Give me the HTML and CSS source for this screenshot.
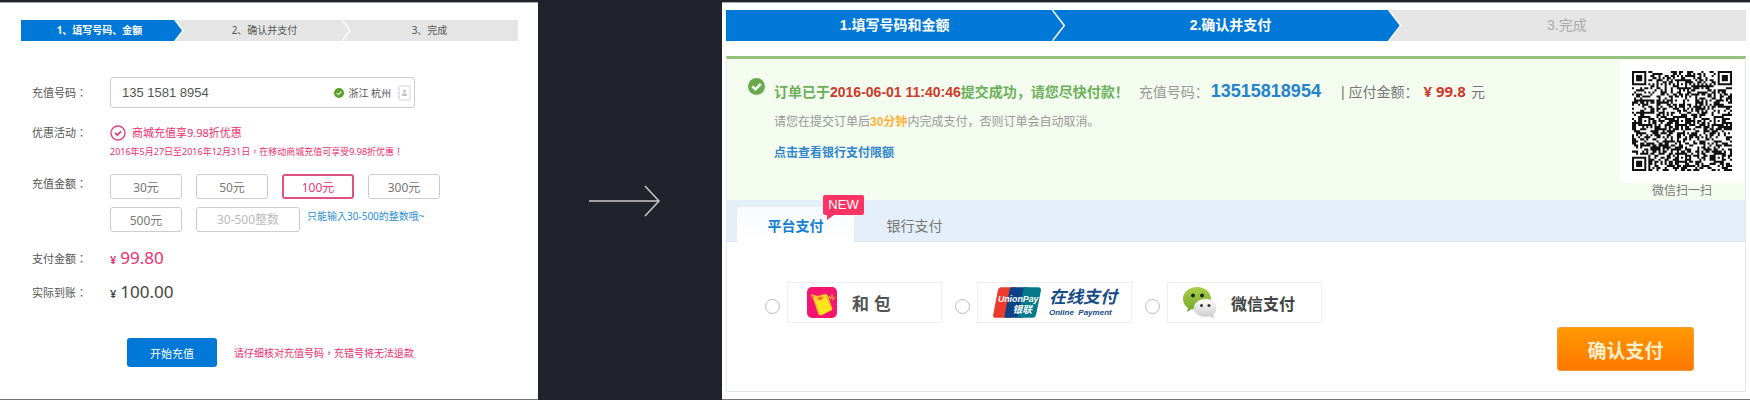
FILE: index.html
```html
<!DOCTYPE html>
<html lang="zh-CN">
<head>
<meta charset="utf-8">
<title>话费充值</title>
<link rel="stylesheet" href="styles.css">
</head>
<body>
<main class="board">
  <section class="panel recharge">
    <ol class="steps steps-small">
      <li class="step done">1、填写号码、金额</li>
      <li class="step">2、确认并支付</li>
      <li class="step">3、完成</li>
    </ol>
    <form class="form" lang="zh-Hant">
      <div class="row">
        <label class="name tall" for="phone">充值号码：</label>
        <div class="phone">
          <input id="phone" class="phone-input" type="text" value="135 1581 8954">
          <svg class="ok" viewBox="0 0 10 10"><circle cx="5" cy="5" r="5" fill="#5a9e2b"/><path d="M2.6 5l1.8 1.7 3-3.2" fill="none" stroke="#e4f3d8" stroke-width="1.1"/></svg>
          <span class="region">浙江 杭州</span>
          <svg class="book" viewBox="0 0 14 16"><rect x="2" y="1" width="11" height="14" rx="1" fill="#fff" stroke="#d4d4d4"/><path d="M0.5 4h2M0.5 8h2M0.5 12h2" stroke="#d4d4d4"/><circle cx="7.5" cy="6" r="1.6" fill="#c4c4c4"/><path d="M4.8 11c0-4 5.400-4 5.400 0z" fill="#c4c4c4"/></svg>
        </div>
      </div>
      <div class="row promo-row">
        <span class="name">优惠活动：</span>
        <div class="promo">
          <p class="promo-title"><svg class="promo-icon" viewBox="0 0 16 16"><circle cx="8" cy="8" r="7" fill="none" stroke="#e0447a" stroke-width="1.400"/><path d="M5 7.800l2.300 2.200 3.900-3.600" fill="none" stroke="#e0447a" stroke-width="1.800"/></svg>商城充值享9.98折优惠</p>
          <p class="promo-note">2016年5月27日至2016年12月31日，在移动商城充值可享受9.98折优惠！</p>
        </div>
      </div>
      <div class="row">
        <span class="name">充值金额：</span>
        <div class="amounts">
          <button type="button" class="amount">30元</button>
          <button type="button" class="amount">50元</button>
          <button type="button" class="amount chosen">100元</button>
          <button type="button" class="amount">300元</button>
          <button type="button" class="amount">500元</button>
          <input class="amount custom" type="text" placeholder="30-500整数" aria-label="其他金额">
          <span class="hint">只能输入30-500的整数哦~</span>
        </div>
      </div>
      <div class="totals">
        <div class="row total"><span class="name">支付金额：</span><span class="price pink"><small class="yen">¥</small>99.80</span></div>
        <div class="row total"><span class="name">实际到账：</span><span class="price"><small class="yen">¥</small>100.00</span></div>
      </div>
      <div class="submit">
        <button type="button" class="start">开始充值</button>
        <span class="warning">请仔细核对充值号码，充错号将无法退款</span>
      </div>
    </form>
  </section>

  <div class="between">
    <svg class="arrow" viewBox="0 0 72 32"><path d="M0 16h70M56 1l14 15-14 15" fill="none" stroke="#c9c9cb" stroke-width="1.500"/></svg>
  </div>

  <section class="panel pay">
    <ol class="steps steps-large">
      <li class="step done">1.填写号码和金额</li>
      <li class="step done">2.确认并支付</li>
      <li class="step">3.完成</li>
    </ol>
    <div class="card">
      <div class="notice">
        <svg class="notice-icon" viewBox="0 0 17 17"><circle cx="8.500" cy="8.500" r="8.500" fill="#69aa4c"/><path d="M4.300 8.400l3.100 3 5.400-5.600" fill="none" stroke="#fff" stroke-width="2.400"/></svg>
        <div class="notice-text">
          <p class="order"><span class="green">订单已于</span><strong class="time">2016-06-01 11:40:46</strong><span class="green">提交成功，请您尽快付款！</span><span class="order-label">充值号码：</span><strong class="number">13515818954</strong><span class="due">| 应付金额：</span><strong class="sum">¥ 99.8</strong><span class="due-unit">元</span></p>
          <p class="expire">请您在提交订单后<span class="minutes">30分钟</span>内完成支付，否则订单会自动取消。</p>
          <p class="limit"><a class="limit-link" href="#">点击查看银行支付限额</a></p>
        </div>
        <figure class="scan">
          <div class="qr-box"><svg class="qr" id="qr" viewBox="0 0 49 49" role="img" aria-label="微信支付二维码"></svg></div>
          <figcaption class="scan-caption">微信扫一扫</figcaption>
        </figure>
      </div>
      <div class="tabs">
        <button type="button" class="tab active">平台支付<span class="badge">NEW</span></button>
        <button type="button" class="tab">银行支付</button>
      </div>
      <form class="checkout">
        <div class="methods">
          <label class="method">
            <input class="radio" type="radio" name="method">
            <span class="brand hebao">
              <svg class="hebao-logo" viewBox="0 0 30 31"><rect width="30" height="31" rx="5" fill="#f5146f"/><path d="M6 11l12-4q2 0 3 2l4 12q1 2-2 3l-8 4q-3 1-4-2z" fill="#ffe51b"/><path d="M4 8l3 4 5 14M19 9l6 13" fill="none" stroke="#ffb52a" stroke-width="1.200"/><path d="M4 7l7 2 8-2-2 5q-4 4-8 0z" fill="#ffc02a"/><path d="M10 11q4 4 6-1z" fill="#f0542a"/><path d="M22 9l2 3M25 7v4M28 10l-3 3" stroke="#ff9b2f" stroke-width="1.400"/></svg>
              <span class="hebao-name">和 包</span>
            </span>
          </label>
          <label class="method">
            <input class="radio" type="radio" name="method">
            <span class="brand union">
              <svg class="union-logo" viewBox="0 0 49 31"><path d="M8 0h16l-6 31H2q-2 0-2-2L5 3q1-3 3-3z" fill="#ee3a2c"/><path d="M19 0h17l-6 31H13q-2 0-1-3l5-26q0-2 2-2z" fill="#0a4286"/><path d="M33 0h13q3 0 3 3l-5 25q-1 3-3 3H27q-2 0-1-3l5-26q0-2 2-2z" fill="#04798a"/><text class="union-latin" x="5" y="15">UnionPay</text><text class="union-cjk" x="20" y="26">银联</text></svg>
              <span class="union-text"><span class="union-name">在线支付</span><span class="union-sub">Online&nbsp; Payment</span></span>
            </span>
          </label>
          <label class="method">
            <input class="radio" type="radio" name="method">
            <span class="brand wechat">
              <svg class="wechat-logo" viewBox="0 0 34 32"><defs><linearGradient id="leaf" x2="0" y2="1"><stop stop-color="#a9cf46"/><stop offset="1" stop-color="#73a82c"/></linearGradient><linearGradient id="pearl" x2="0" y2="1"><stop stop-color="#fff"/><stop offset="1" stop-color="#c9c9c9"/></linearGradient></defs><path d="M14 0C6 0 0 5 0 12c0 4 2 7 5 9l-1 4 5-3c14 3 19-4 19-10C28 5 22 0 14 0z" fill="url(#leaf)"/><circle cx="10" cy="8.500" r="1.900" fill="#222"/><circle cx="19" cy="8.500" r="1.900" fill="#222"/><path d="M23 12c-7 0-12 4-12 9 0 6 7 10 15 8l5 2-1-4c2-1 3-4 3-6 0-5-4-9-10-9z" fill="url(#pearl)" stroke="#d5d5d5" stroke-width=".5"/><circle cx="18.500" cy="18.500" r="1.500" fill="#333"/><circle cx="26" cy="18.500" r="1.500" fill="#333"/></svg>
              <span class="wechat-name">微信支付</span>
            </span>
          </label>
        </div>
        <button type="button" class="confirm">确认支付</button>
      </form>
    </div>
  </section>
</main>
<script src="qr.js"></script>
</body>
</html>
```
FILE: styles.css
```css
* { box-sizing: border-box; }
body {
  margin: 0;
  background: #20232b;
  color: #555;
  font-family: "Noto Sans", "Noto Sans CJK SC", sans-serif;
  font-size: 11px;
}
p, ol, figure { margin: 0; padding: 0; }
button, input { font-family: inherit; margin: 0; }
svg { display: block; flex: none; }

.board {
  display: grid;
  grid-template-columns: 538fr 184fr 1028fr;
  min-height: 100vh;
  padding-top: 2px;
}
.panel {
  background: #fff;
  border-top: 1px solid #aaa;
  border-bottom: 1px solid #777;
}

.steps { display: flex; list-style: none; }
.step {
  --fill: #e5e5e5;
  position: relative;
  flex: 1 1 0;
  background: var(--fill);
  text-align: center;
}
.step.done { --fill: #0078d7; color: #fff; font-weight: 700; }
.step:nth-child(1) { z-index: 3; }
.step:nth-child(2) { z-index: 2; }
.step:not(:last-child)::before,
.step:not(:last-child)::after {
  content: "";
  position: absolute;
  top: 0;
  bottom: 0;
  left: calc(100% - 1px);
  width: var(--tip);
  background: var(--fill);
  clip-path: polygon(0 0, 1px 0, 100% 50%, 1px 100%, 0 100%);
}
.step:not(:last-child)::before { background: #f8fcff; margin-left: 2px; }
.steps-small { --tip: 9px; font-size: 10px; line-height: 21px; }
.steps-small .step:nth-child(1) { flex-grow: 153; text-indent: 4px; }
.steps-small .step:nth-child(2) { flex-grow: 167; text-indent: 14px; }
.steps-small .step:nth-child(3) { flex-grow: 177; }
.steps-large { --tip: 13px; font-size: 14px; line-height: 31px; }
.steps-large .step:nth-child(1) { flex-grow: 325; text-indent: 12px; }
.steps-large .step:nth-child(2) { flex-grow: 336; text-indent: 22px; }
.steps-large .step:nth-child(3) { flex-grow: 358; color: #aaa; }

.recharge { padding: 17px 20px 0 21px; }
.form { padding: 36px 0 0 11px; font-family: "Noto Sans", "Noto Sans CJK TC", sans-serif; }
.row { display: flex; align-items: flex-start; }
.name { flex: none; width: 78px; line-height: 20px; }
.name.tall { line-height: 31px; }
.phone {
  display: flex;
  align-items: center;
  width: 305px;
  height: 31px;
  padding: 0 3px 0 11px;
  border: 1px solid #ccc;
  border-radius: 3px;
}
.phone-input {
  flex: 1;
  min-width: 0;
  padding: 0;
  border: 0;
  color: #555;
  font-family: "Liberation Sans", sans-serif;
  font-size: 13px;
}
.ok { width: 10px; height: 10px; }
.region { margin: 0 6px 0 4px; font-size: 10px; }
.book { width: 14px; height: 16px; }
.promo-row { margin: 15px 0 12px; }
.promo { color: #ee2e6c; }
.promo-title { display: flex; align-items: center; gap: 6px; line-height: 20px; }
.promo-icon { width: 16px; height: 16px; }
.promo-note { font-size: 9px; line-height: 18px; padding-bottom: 1px; }
.amounts { display: flex; flex-wrap: wrap; gap: 8px 14px; width: 330px; }
.amount {
  width: 72px;
  height: 25px;
  padding: 0;
  border: 1px solid #ccc;
  border-radius: 3px;
  background: #fff;
  color: #777;
  font-size: 12px;
  text-align: center;
}
.amount.chosen { border: 2px solid #e0527f; color: #e8386f; }
.custom { width: 104px; }
.custom::placeholder { color: #bbb; opacity: 1; }
.hint { margin-left: -7px; color: #2c8fd2; font-size: 10px; line-height: 18px; }
.totals { margin-top: 10px; }
.total { align-items: center; height: 34px; }
.price { display: flex; align-items: baseline; gap: 4px; color: #444; font-size: 17px; line-height: 20px; }
.price.pink { color: #ee2e6c; }
.yen { font-size: 11px; font-weight: 600; }
.submit { display: flex; align-items: center; gap: 17px; margin: 28px 0 0 95px; }
.start {
  width: 90px;
  height: 29px;
  padding: 0;
  border: 0;
  border-radius: 3px;
  background: #0078d7;
  color: #fff;
  font-size: 11px;
}
.warning { color: #ee2e6c; font-size: 10px; }

.between { display: flex; justify-content: center; align-items: center; }
.arrow { width: 72px; height: 32px; margin-right: 10px; }

.pay { padding: 7px 4px 6px; font-family: "Liberation Sans", "Noto Sans CJK SC", sans-serif; }
.card { margin-top: 15px; border: 1px solid #e6e9ea; border-top: 3px solid #95c17e; }
.notice { display: flex; height: 141px; padding: 0 1px 0 21px; background: #f3fcee; }
.notice-icon { width: 17px; height: 17px; margin-top: 19px; }
.notice-text { flex: 1; padding: 20px 0 0 9px; color: #999; font-size: 12px; white-space: nowrap; }
.order { display: flex; align-items: baseline; font-size: 14px; line-height: 24px; }
.green { color: #6cb05a; font-weight: 700; }
.time, .sum { color: #cc3a2c; }
.order-label { margin-left: 10px; }
.number { margin: 0 20px 0 2px; color: #2583cc; font-size: 18px; }
.due, .due-unit { color: #777; }
.sum { margin: 0 5px; font-family: "Noto Sans", sans-serif; font-size: 15px; }
.expire { margin-top: 8px; line-height: 20px; }
.minutes { color: #ffb240; font-weight: 700; }
.limit { margin-top: 11px; line-height: 20px; }
.limit-link { color: #2e86cc; font-weight: 700; text-decoration: none; }
.scan { width: 124px; text-align: center; }
.qr-box { padding: 12px; background: #fff; }
.qr { width: 100px; height: 100px; }
.scan-caption { color: #777; font-size: 12px; line-height: 17px; }

.tabs {
  display: flex;
  gap: 2px;
  height: 42px;
  padding: 7px 10px 0;
  border-bottom: 1px solid #dce5ec;
  background: #e3eef8;
}
.tab {
  position: relative;
  width: 117px;
  height: 35px;
  padding: 0;
  border: 0;
  background: transparent;
  color: #777;
  font-size: 14px;
}
.tab.active {
  border-radius: 4px 4px 0 0;
  background: linear-gradient(#f8fafc, #fff);
  color: #1580d0;
  font-weight: 700;
}
.badge {
  position: absolute;
  top: -12px;
  left: 86px;
  width: 41px;
  border-radius: 2px;
  background: #fb3563;
  color: #fff;
  font-size: 13px;
  font-weight: 400;
  line-height: 20px;
}
.badge::after {
  content: "";
  position: absolute;
  top: 100%;
  left: 4px;
  border-top: 5px solid #fb3563;
  border-right: 7px solid transparent;
}

.checkout { display: flex; flex-direction: column; padding: 40px 51px 20px 38px; }
.methods { display: flex; gap: 13px; }
.method { display: flex; align-items: center; gap: 7px; }
.radio {
  appearance: none;
  width: 15px;
  height: 15px;
  margin-top: 8px;
  border: 1px solid #bbb;
  border-radius: 50%;
  background: #fff;
}
.brand {
  display: flex;
  align-items: center;
  width: 155px;
  height: 41px;
  border: 1px solid #eee;
}
.hebao { gap: 15px; padding-left: 19px; }
.hebao-logo { width: 30px; height: 31px; }
.hebao-name { color: #555; font-size: 17px; font-weight: 700; }
.union { gap: 8px; padding-left: 15px; color: #174a86; font-style: italic; }
.union-logo { width: 48px; height: 31px; }
.union-latin { fill: #fff; font: italic bold 9px "Liberation Sans", sans-serif; }
.union-cjk { fill: #fff; font: italic bold 10px "Noto Sans CJK SC", sans-serif; }
.union-text { display: flex; flex-direction: column; }
.union-name { font-size: 17px; font-weight: 700; line-height: 20px; }
.union-sub { font-size: 8px; font-weight: 700; line-height: 10px; }
.wechat { gap: 14px; padding-left: 15px; }
.wechat-logo { width: 34px; height: 32px; }
.wechat-name { color: #444; font-size: 16px; font-weight: 700; }
.confirm {
  align-self: flex-end;
  width: 137px;
  height: 44px;
  margin-top: 4px;
  padding: 0;
  border: 1px solid #f59a35;
  border-radius: 3px;
  background: linear-gradient(#ff9800, #ff7800);
  color: #ffeecb;
  font-size: 19px;
  font-weight: 700;
}
```
FILE: qr.js
```js
// Draws the 49-module code: finder, alignment and timing patterns around the data area.
const SIZE = 49;
const grid = [];
let seed = 20160601;
function bit() {
  seed = (Math.imul(seed, 1103515245) + 12345) >>> 0;
  return (seed >>> 16) & 1;
}
for (let y = 0; y < SIZE; y++) {
  grid.push([]);
  for (let x = 0; x < SIZE; x++) grid[y].push(bit());
}
for (let i = 0; i < SIZE; i++) grid[6][i] = grid[i][6] = (i + 1) % 2;

// Concentric squares, with the given rings left light.
function target(cx, cy, radius, lightRings) {
  for (let dy = -radius; dy <= radius; dy++) {
    for (let dx = -radius; dx <= radius; dx++) {
      const ring = Math.max(Math.abs(dx), Math.abs(dy));
      if (grid[cy + dy] && cx + dx >= 0 && cx + dx < SIZE) {
        grid[cy + dy][cx + dx] = lightRings.includes(ring) ? 0 : 1;
      }
    }
  }
}
[[24, 6], [6, 24], [24, 24], [42, 24], [24, 42], [42, 42]].forEach(([x, y]) => target(x, y, 2, [1]));
[[3, 3], [45, 3], [3, 45]].forEach(([x, y]) => target(x, y, 4, [2, 4]));

let d = "";
grid.forEach((row, y) => row.forEach((on, x) => { if (on) d += `M${x} ${y}h1v1h-1z`; }));
const path = document.createElementNS("http://www.w3.org/2000/svg", "path");
path.setAttribute("d", d);
path.setAttribute("fill", "#111");
document.getElementById("qr").appendChild(path);
```
